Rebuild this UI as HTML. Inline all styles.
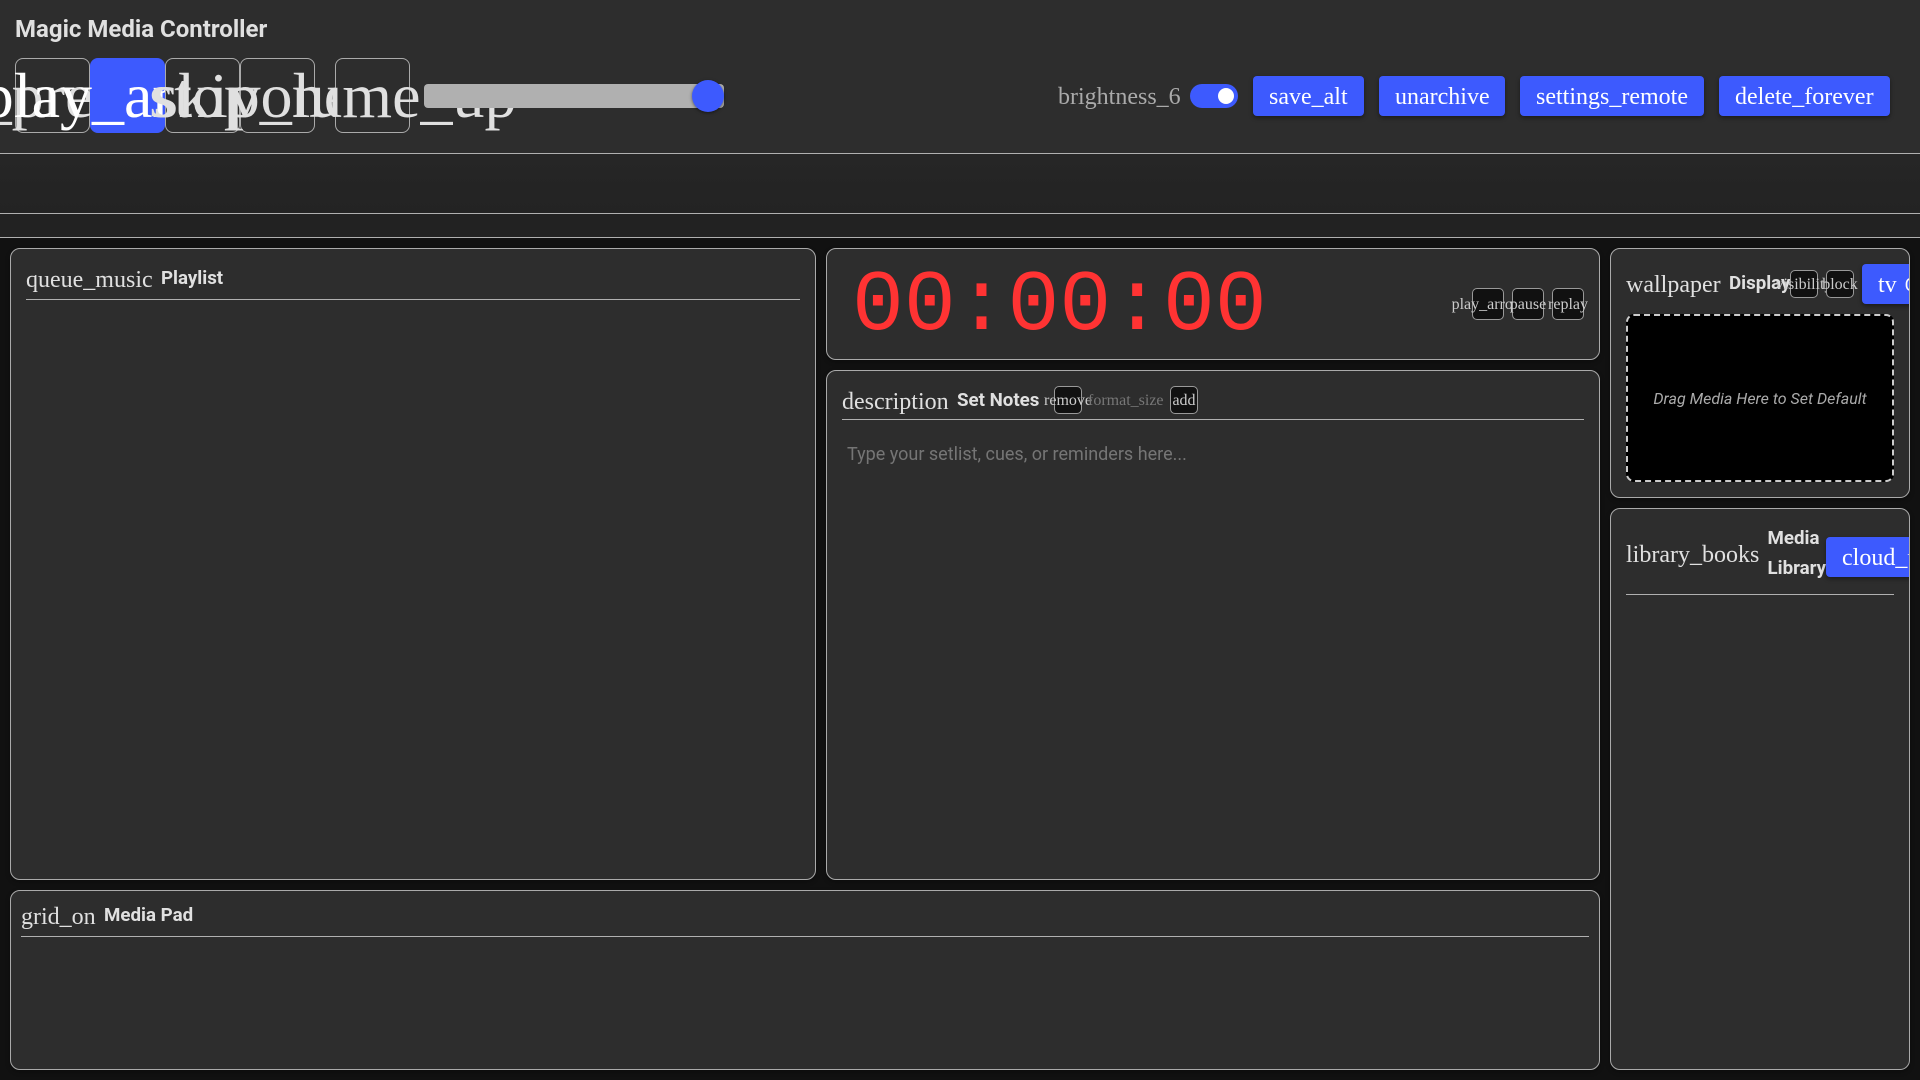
<!DOCTYPE html>
<html lang="en">
<head>
<meta charset="utf-8">
<title>Magic Media Controller</title>
<style>
html,body{margin:0;padding:0;width:1920px;height:1080px;overflow:hidden;background:#111;}
body{position:relative;font-family:Roboto,"Liberation Sans",sans-serif;color:#e0e0e0;}
.a{position:absolute;box-sizing:border-box;}
.ic{font-family:"Liberation Serif",serif;white-space:nowrap;}
.row{display:flex;align-items:center;white-space:nowrap;}
.btn{position:absolute;box-sizing:border-box;display:flex;align-items:center;justify-content:center;white-space:nowrap;font-family:"Liberation Serif",serif;border:1px solid #aaa;}
.tp{top:58px;width:75px;height:75px;font-size:64px;background:#2d2d2d;border-radius:8px;color:#e0e0e0;}
.sm{background:#111;border-radius:5px;font-size:16px;color:#ccc;padding-top:2px;border-color:#999;}
.pri{position:absolute;box-sizing:border-box;display:flex;align-items:center;white-space:nowrap;height:40px;padding:2px 16px 0;background:#3d5afe;color:#fff;font-family:"Liberation Serif",serif;font-size:24px;border-radius:4px;box-shadow:0 2px 4px rgba(0,0,0,.4);}
.panel{position:absolute;box-sizing:border-box;background:#2d2d2d;border:1px solid #aaa;border-radius:10px;overflow:hidden;box-shadow:0 2px 5px rgba(0,0,0,.3);}
.line{position:absolute;height:1px;background:#b0b0b0;}
.lb{position:absolute;font-weight:700;font-size:18.72px;white-space:nowrap;display:flex;align-items:center;height:30px;color:#e0e0e0;}
.h{position:absolute;font-family:"Liberation Serif",serif;font-size:24px;white-space:nowrap;display:flex;align-items:center;height:30px;color:#e0e0e0;}
</style>
</head>
<body>
<!-- header -->
<div class="a" style="left:0;top:0;width:1920px;height:153px;background:#2d2d2d;"></div>
<div class="line" style="left:0;top:153px;width:1920px;"></div>
<div class="a" style="left:0;top:154px;width:1920px;height:59px;background:linear-gradient(#262626,#232323);"></div>
<div class="line" style="left:0;top:213px;width:1920px;"></div>
<div class="a" style="left:0;top:214px;width:1920px;height:23px;background:#222;"></div>
<div class="line" style="left:0;top:237px;width:1920px;"></div>

<div class="a row" style="left:15px;top:14px;height:30px;font-size:24px;font-weight:700;color:#e0e0e0;">Magic Media Controller</div>

<div class="btn tp" style="left:15px;">skip_previous</div>
<div class="btn tp" style="left:90px;background:#3d5afe;border-color:#3d5afe;color:#fff;">play_arrow</div>
<div class="btn tp" style="left:165px;">stop</div>
<div class="btn tp" style="left:240px;">skip_next</div>
<div class="btn tp" style="left:335px;">volume_up</div>

<div class="a" style="left:424px;top:84px;width:300px;height:24px;background:#b0b0b0;border-radius:4px;"></div>
<div class="a" style="left:692px;top:80px;width:32px;height:32px;background:#3d5afe;border-radius:50%;box-shadow:0 1px 3px rgba(0,0,0,.5);"></div>

<div class="a ic row" style="left:1058px;top:82px;height:30px;font-size:24px;color:#aaa;">brightness_6</div>
<div class="a" style="left:1190px;top:84px;width:48px;height:24px;background:#3d5afe;border-radius:12px;"></div>
<div class="a" style="left:1218px;top:88px;width:16px;height:16px;background:#fff;border-radius:50%;"></div>

<div class="pri" style="left:1253px;top:76px;width:111px;">save_alt</div>
<div class="pri" style="left:1379px;top:76px;width:126px;">unarchive</div>
<div class="pri" style="left:1520px;top:76px;width:184px;">settings_remote</div>
<div class="pri" style="left:1719px;top:76px;width:171px;">delete_forever</div>

<!-- playlist -->
<div class="panel" style="left:10px;top:248px;width:806px;height:632px;">
  <div class="h" style="left:15px;top:16px;">queue_music</div>
  <div class="lb" style="left:150px;top:14px;">Playlist</div>
  <div class="line" style="left:15px;top:50px;width:774px;"></div>
</div>

<!-- media pad -->
<div class="panel" style="left:10px;top:890px;width:1590px;height:180px;">
  <div class="h" style="left:10px;top:11px;">grid_on</div>
  <div class="lb" style="left:93px;top:9px;">Media Pad</div>
  <div class="line" style="left:10px;top:45px;width:1568px;"></div>
</div>

<!-- timer -->
<div class="panel" style="left:826px;top:248px;width:774px;height:112px;">
  <div class="a" style="left:25px;top:2px;height:110px;display:flex;align-items:center;font-family:'Liberation Mono',monospace;font-weight:400;font-size:86.4px;color:#f33;white-space:nowrap;">00:00:00</div>
  <div class="btn sm" style="left:645px;top:39px;width:32px;height:32px;">play_arrow</div>
  <div class="btn sm" style="left:685px;top:39px;width:32px;height:32px;">pause</div>
  <div class="btn sm" style="left:725px;top:39px;width:32px;height:32px;">replay</div>
</div>

<!-- notes -->
<div class="panel" style="left:826px;top:370px;width:774px;height:510px;">
  <div class="h" style="left:15px;top:16px;">description</div>
  <div class="lb" style="left:130px;top:14px;">Set Notes</div>
  <div class="btn sm" style="left:227px;top:15px;width:28px;height:28px;">remove</div>
  <div class="a ic row" style="left:261px;top:15px;height:30px;font-size:16px;color:#777;">format_size</div>
  <div class="btn sm" style="left:343px;top:15px;width:28px;height:28px;">add</div>
  <div class="line" style="left:15px;top:48px;width:742px;"></div>
  <div class="a row" style="left:20px;top:68px;height:30px;font-size:18px;color:#757575;">Type your setlist, cues, or reminders here...</div>
</div>

<!-- display -->
<div class="panel" style="left:1610px;top:248px;width:300px;height:250px;">
  <div class="h" style="left:15px;top:21px;">wallpaper</div>
  <div class="lb" style="left:118px;top:19px;">Display</div>
  <div class="btn sm" style="left:179px;top:21px;width:28px;height:28px;">visibility</div>
  <div class="btn sm" style="left:215px;top:21px;width:28px;height:28px;">block</div>
  <div class="pri" style="left:251px;top:15px;">tv<span style="font-family:Roboto,'Liberation Sans',sans-serif;font-size:18px;margin-left:8px;">Cast</span></div>
  <div class="a" style="left:15px;top:65px;width:268px;height:168px;background:#000;border:2px dashed #ccc;border-radius:8px;display:flex;align-items:center;justify-content:center;font-style:italic;font-size:16px;color:#aaa;white-space:nowrap;">Drag Media Here to Set Default</div>
</div>

<!-- library -->
<div class="panel" style="left:1610px;top:508px;width:300px;height:562px;">
  <div class="h" style="left:15px;top:31px;">library_books</div>
  <div class="lb" style="left:156.5px;top:14px;">Media</div>
  <div class="lb" style="left:156.5px;top:44px;">Library</div>
  <div class="pri" style="left:215px;top:28px;">cloud_upload</div>
  <div class="line" style="left:15px;top:85px;width:268px;"></div>
</div>
</body>
</html>
